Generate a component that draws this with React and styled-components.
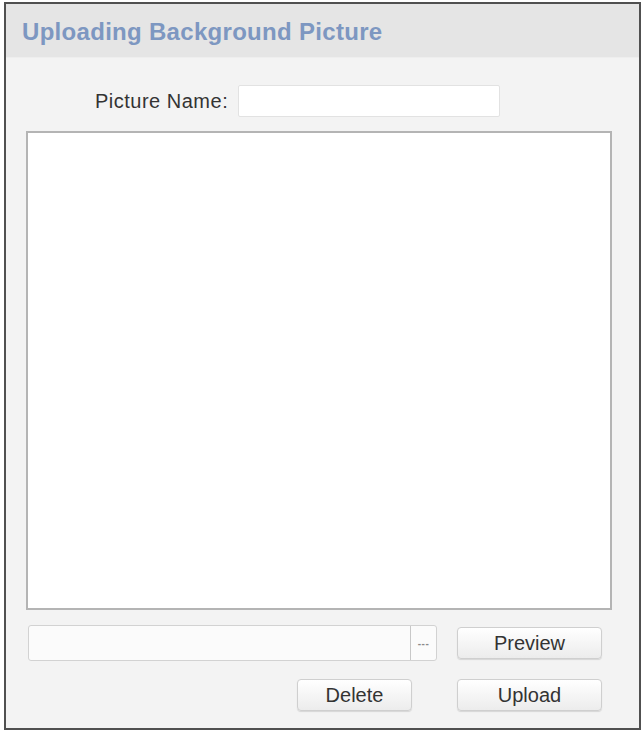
import React from "react";
import styled, { createGlobalStyle } from "styled-components";

const Global = createGlobalStyle`
  html, body { margin: 0; padding: 0; background: #ffffff; }
  body { font-family: "Liberation Sans", Arial, sans-serif; }
  * { box-sizing: border-box; }
`;

const Frame = styled.div`
  margin: 2px 2px 0 4px;
  width: 637px;
  height: 728px;
  border: 2px solid #505050;
  background: #f3f3f3;
  display: flex;
  flex-direction: column;
`;

const Header = styled.div`
  height: 54px;
  background: #e5e5e5;
  border-bottom: 1px solid #eeeeee;
  display: flex;
  align-items: center;
  padding: 2px 0 0 16px;
`;

const Title = styled.h1`
  margin: 0;
  font-size: 24px;
  font-weight: bold;
  color: #7d97c1;
  letter-spacing: 0.3px;
`;

const Body = styled.div`
  flex: 1;
  display: flex;
  flex-direction: column;
  padding: 27px 27px 0 20px;
`;

const NameRow = styled.div`
  display: flex;
  align-items: center;
  padding-left: 69px;
  gap: 10px;
`;

const Label = styled.label`
  width: 133px;
  text-align: right;
  white-space: nowrap;
  font-size: 20px;
  color: #333333;
  letter-spacing: 0.5px;
`;

const TextInput = styled.div`
  width: 262px;
  height: 32px;
  background: #ffffff;
  border: 1px solid #e2e2e2;
  border-radius: 2px;
`;

const PreviewArea = styled.div`
  margin-top: 14px;
  width: 586px;
  height: 479px;
  background: #ffffff;
  border: 2px solid #b4b4b4;
`;

const Row = styled.div`
  display: flex;
  align-items: center;
  margin-top: ${(p) => p.$top}px;
  padding-left: ${(p) => p.$left}px;
  gap: ${(p) => p.$gap}px;
`;

const FileField = styled.div`
  width: 409px;
  height: 36px;
  display: flex;
  background: #fbfbfb;
  border: 1px solid #d2d2d2;
  border-radius: 3px;
  overflow: hidden;
`;

const FilePath = styled.div`
  flex: 1;
  border-right: 1px solid #c8c8c8;
`;

const Browse = styled.div`
  width: 25px;
  display: flex;
  align-items: center;
  justify-content: center;
  font-size: 10px;
  font-weight: bold;
  color: #8a8a8a;
  letter-spacing: 0.5px;
`;

const Button = styled.button`
  width: ${(p) => p.$w}px;
  height: 32px;
  padding: 0;
  font-family: "Liberation Sans", Arial, sans-serif;
  font-size: 20px;
  color: #333333;
  background: linear-gradient(#ffffff, #ececec);
  border: 1px solid #cfcfcf;
  border-radius: 4px;
  box-shadow: 0 1px 1px rgba(0, 0, 0, 0.12);
`;

export default function App() {
  return (
    <>
      <Global />
      <Frame>
        <Header>
          <Title>Uploading Background Picture</Title>
        </Header>
        <Body>
          <NameRow>
            <Label>Picture Name:</Label>
            <TextInput />
          </NameRow>
          <PreviewArea />
          <Row $top={15} $left={2} $gap={20}>
            <FileField>
              <FilePath />
              <Browse>---</Browse>
            </FileField>
            <Button $w={145}>Preview</Button>
          </Row>
          <Row $top={18} $left={271} $gap={45}>
            <Button $w={115}>Delete</Button>
            <Button $w={145}>Upload</Button>
          </Row>
        </Body>
      </Frame>
    </>
  );
}
